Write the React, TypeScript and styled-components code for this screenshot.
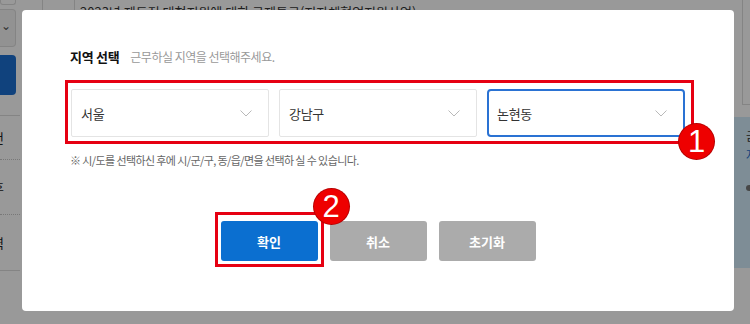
import React from 'react';
import styled, { createGlobalStyle } from 'styled-components';

const GlobalStyle = createGlobalStyle`
  html, body {
    margin: 0;
    padding: 0;
    background: #999;
  }
  * {
    box-sizing: border-box;
  }
  body {
    font-family: 'Noto Sans CJK KR', 'Noto Sans', sans-serif;
  }
`;

const regions = [
  { label: '서울', active: false },
  { label: '강남구', active: false },
  { label: '논현동', active: true },
];

const sideMenu = [
  { label: '번', height: 44, dotted: true },
  { label: '후', height: 55, dotted: true },
  { label: '력', height: 55, dotted: false },
];

const Chevron = () => (
  <svg width='12' height='7' viewBox='0 0 12 7' fill='none'>
    <path d='M0.5 0.5L6 6L11.5 0.5' stroke='#b9b9b9' strokeWidth='1' />
  </svg>
);

const App = () => {
  return (
    <Screen>
      <GlobalStyle />
      <Backdrop>
        <SideRail>
          <RailBox />
          <RailSelect>⌄</RailSelect>
          <RailButton />
          <RailMenu>
            {sideMenu.map((m) => (
              <RailMenuItem key={m.label} $height={m.height} $dotted={m.dotted}>
                {m.label}
              </RailMenuItem>
            ))}
          </RailMenu>
        </SideRail>
        <MainArea>
          <TopRow>
            <TopCell />
            <TopTitle>2023년 제도적 대형지원에 대한 규제특구(지자체협업지원사업)</TopTitle>
          </TopRow>
        </MainArea>
        <RightRail>
          <RightInput />
          <RightPanel>
            <span>금</span>
            <RightLink>자</RightLink>
            <RightDot />
          </RightPanel>
        </RightRail>
      </Backdrop>
      <Dim />

      <Modal>
        <TitleRow>
          <Title>지역 선택</Title>
          <Subtitle>근무하실 지역을 선택해주세요.</Subtitle>
        </TitleRow>

        <SelectFrame>
          {regions.map((r) => (
            <SelectBox key={r.label} $active={r.active}>
              <span>{r.label}</span>
              <Chevron />
            </SelectBox>
          ))}
          <Badge $right={-23} $bottom={-18}>1</Badge>
        </SelectFrame>

        <Note>※ 시/도를 선택하신 후에 시/군/구, 동/읍/면을 선택하 실 수 있습니다.</Note>

        <ButtonRow>
          <ButtonSlot>
            <Button $primary>확인</Button>
            <Highlight />
            <Badge $right={-31} $top={-32}>2</Badge>
          </ButtonSlot>
          <Button>취소</Button>
          <Button>초기화</Button>
        </ButtonRow>
      </Modal>
    </Screen>
  );
};

export default App;

const Screen = styled.div`
  position: relative;
  width: 750px;
  height: 324px;
  overflow: hidden;
  background: #fff;
`;

const Backdrop = styled.div`
  display: flex;
  height: 100%;
`;

const SideRail = styled.div`
  width: 20px;
  display: flex;
  flex-direction: column;
  overflow: hidden;
`;

const RailBox = styled.div`
  height: 5px;
  margin-right: 4px;
  border: 1px solid #ddd;
  border-top: none;
  border-radius: 0 0 3px 3px;
`;

const RailSelect = styled.div`
  height: 38px;
  margin: 4px 4px 0 0;
  background: #f4f4f4;
  border: 1px solid #dcdcdc;
  border-left: none;
  border-radius: 0 4px 4px 0;
  color: #555;
  font-size: 12px;
  line-height: 30px;
  padding-left: 1px;
`;

const RailButton = styled.div`
  height: 40px;
  margin: 8px 4px 0 0;
  background: #1c6fd0;
  border-radius: 0 4px 4px 0;
`;

const RailMenu = styled.div`
  margin-top: 20px;
  border-top: 1px solid #ddd;
  border-bottom: 1px solid #ddd;
`;

const RailMenuItem = styled.div<{ $height: number; $dotted: boolean }>`
  height: ${({ $height }) => $height}px;
  display: flex;
  align-items: center;
  justify-content: flex-end;
  padding-right: 16px;
  font-size: 13px;
  color: #222;
  white-space: nowrap;
  border-bottom: ${({ $dotted }) => ($dotted ? '1px dotted #c8c8c8' : 'none')};
`;

const MainArea = styled.div`
  flex: 1;
`;

const TopRow = styled.div`
  display: flex;
  align-items: flex-start;
  height: 12px;
`;

const TopCell = styled.div`
  width: 33px;
  height: 10px;
  margin-left: 22px;
  border-left: 1px solid #ddd;
  border-right: 1px solid #ddd;
`;

const TopTitle = styled.div`
  margin-left: 5px;
  margin-top: 3px;
  font-size: 13px;
  line-height: 18px;
  color: #333;
  white-space: nowrap;
`;

const RightRail = styled.div`
  width: 24px;
  display: flex;
  flex-direction: column;
  align-items: flex-end;
`;

const RightInput = styled.div`
  width: 8px;
  height: 105px;
  border-left: 1px solid #ddd;
  border-bottom: 1px solid #ddd;
`;

const RightPanel = styled.div`
  width: 24px;
  height: 151px;
  margin-top: 12px;
  background: #d3ebfa;
  padding: 10px 0 0 20px;
  display: flex;
  flex-direction: column;
  gap: 2px;
  font-size: 12px;
  color: #333;
  overflow: hidden;
`;

const RightLink = styled.span`
  color: #1c6fd0;
`;

const RightDot = styled.span`
  width: 6px;
  height: 6px;
  margin-top: 20px;
  border-radius: 50%;
  background: #777;
`;

const Dim = styled.div`
  position: absolute;
  inset: 0;
  background: rgba(0, 0, 0, 0.4);
`;

const Modal = styled.div`
  position: absolute;
  top: 10px;
  left: 22px;
  width: 712px;
  height: 301px;
  background: #fff;
  border-radius: 4px;
  padding: 38px 0 0 43px;
  display: flex;
  flex-direction: column;
  align-items: flex-start;
`;

const TitleRow = styled.div`
  display: flex;
  align-items: baseline;
  gap: 11px;
  padding-left: 5px;
  line-height: 18px;
`;

const Title = styled.span`
  font-size: 13px;
  font-weight: 700;
  color: #111;
  letter-spacing: -0.3px;
`;

const Subtitle = styled.span`
  font-size: 12px;
  color: #999;
  letter-spacing: -0.5px;
`;

const SelectFrame = styled.div`
  position: relative;
  margin-top: 14px;
  display: flex;
  gap: 10px;
  padding: 6px 6px 4px 3px;
  border: 3px solid #e60012;
`;

const SelectBox = styled.div<{ $active: boolean }>`
  width: 198px;
  height: 48px;
  display: flex;
  align-items: center;
  justify-content: space-between;
  padding: 0 16px 0 ${({ $active }) => ($active ? 8 : 9)}px;
  border: ${({ $active }) => ($active ? '2px solid #2a72d3' : '1px solid #e4e4e4')};
  border-radius: ${({ $active }) => ($active ? 4 : 2)}px;
  font-size: 13px;
  color: #333;
  letter-spacing: -0.3px;
`;

const Badge = styled.div<{ $right?: number; $top?: number; $bottom?: number }>`
  position: absolute;
  right: ${({ $right }) => ($right !== undefined ? `${$right}px` : 'auto')};
  top: ${({ $top }) => ($top !== undefined ? `${$top}px` : 'auto')};
  bottom: ${({ $bottom }) => ($bottom !== undefined ? `${$bottom}px` : 'auto')};
  width: 35px;
  height: 35px;
  border-radius: 50%;
  background: #ee0000;
  box-shadow: 0 0 0 1px #b80000;
  color: #fff;
  font-family: 'Liberation Sans', Arial, sans-serif;
  font-size: 31px;
  line-height: 35px;
  text-align: center;
  z-index: 2;
`;

const Note = styled.p`
  margin: 8px 0 0 5px;
  font-size: 11px;
  line-height: 16px;
  color: #666;
  letter-spacing: -0.6px;
`;

const ButtonRow = styled.div`
  align-self: stretch;
  margin: 53px 43px 0 0;
  display: flex;
  justify-content: center;
  gap: 12px;
`;

const ButtonSlot = styled.div`
  position: relative;
  display: flex;
`;

const Button = styled.button<{ $primary?: boolean }>`
  width: 97px;
  height: 40px;
  border: none;
  border-radius: 3px;
  background: ${({ $primary }) => ($primary ? '#0b6fd0' : '#ababab')};
  color: #fff;
  font-family: 'Noto Sans CJK KR', sans-serif;
  font-size: 13px;
  font-weight: 700;
  cursor: pointer;
`;

const Highlight = styled.div`
  position: absolute;
  top: -9px;
  left: -6px;
  right: -6px;
  bottom: -6px;
  border: 3px solid #e60012;
  pointer-events: none;
`;
